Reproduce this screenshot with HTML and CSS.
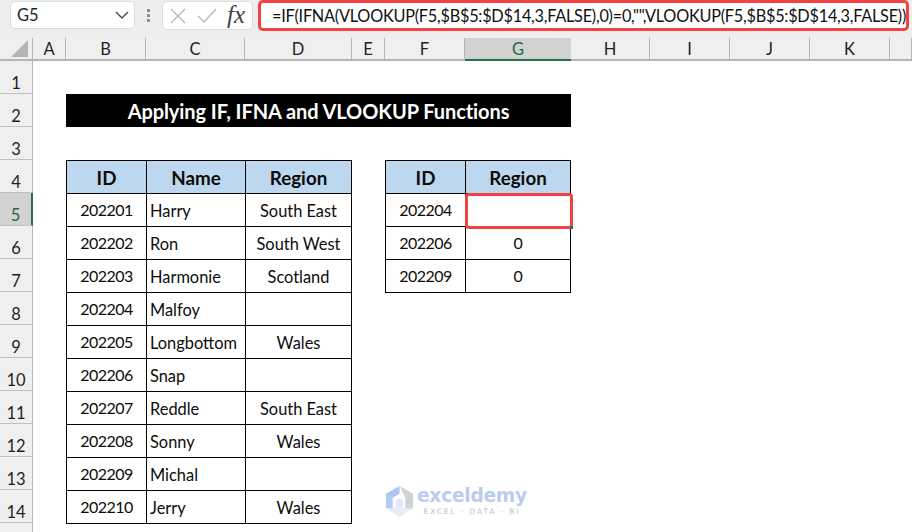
FILE: index.html
```html
<!DOCTYPE html>
<html lang="en">
<head>
<meta charset="utf-8">
<title>Applying IF, IFNA and VLOOKUP Functions</title>
<link rel="stylesheet" href="styles.css">
</head>
<body>
<div class="app">
  <div class="formula-row">
    <div class="name-box"><span>G5</span>
      <svg class="chev" width="14" height="8" viewBox="0 0 14 8"><path d="M1 1l6 6 6-6" fill="none" stroke="#444" stroke-width="1.4"/></svg>
    </div>
    <div class="grip"><i></i><i></i><i></i></div>
    <div class="fn-box">
      <svg width="16" height="16" viewBox="0 0 16 16"><path d="M1 1l14 14M15 1L1 15" fill="none" stroke="#b8b8b8" stroke-width="1.4"/></svg>
      <svg width="20" height="15" viewBox="0 0 20 15"><path d="M1 8l6 6L19 1" fill="none" stroke="#b8b8b8" stroke-width="1.4"/></svg>
      <span class="fx">fx</span>
    </div>
    <div class="formula">=IF(IFNA(VLOOKUP(F5,$B$5:$D$14,3,FALSE),0)=0,"",VLOOKUP(F5,$B$5:$D$14,3,FALSE))</div>
  </div>
  <div class="col-head">
    <div class="corner"><svg width="17" height="17" viewBox="0 0 17 17"><path d="M17 0v17H0z" fill="#b4b4b4"/></svg></div>
    <div class="ch w33">A</div><div class="ch w80">B</div><div class="ch w99">C</div><div class="ch w107">D</div><div class="ch w33">E</div><div class="ch w80">F</div><div class="ch w106 sel">G</div><div class="ch w79">H</div><div class="ch w80">I</div><div class="ch w80">J</div><div class="ch w80">K</div><div class="ch w22"></div>
  </div>
  <div class="body">
    <div class="row-head">
      <div class="rh">1</div><div class="rh">2</div><div class="rh">3</div><div class="rh">4</div><div class="rh sel">5</div><div class="rh">6</div><div class="rh">7</div><div class="rh">8</div><div class="rh">9</div><div class="rh">10</div><div class="rh">11</div><div class="rh">12</div><div class="rh">13</div><div class="rh">14</div><div class="rh"></div>
    </div>
    <div class="sheet">
      <div class="title">Applying IF, IFNA and VLOOKUP Functions</div>
      <div class="tbl tbl-left">
        <div class="c h">ID</div><div class="c h">Name</div><div class="c h">Region</div>
        <div class="c n">202201</div><div class="c l">Harry</div><div class="c">South East</div>
        <div class="c n">202202</div><div class="c l">Ron</div><div class="c">South West</div>
        <div class="c n">202203</div><div class="c l">Harmonie</div><div class="c">Scotland</div>
        <div class="c n">202204</div><div class="c l">Malfoy</div><div class="c"></div>
        <div class="c n">202205</div><div class="c l">Longbottom</div><div class="c">Wales</div>
        <div class="c n">202206</div><div class="c l">Snap</div><div class="c"></div>
        <div class="c n">202207</div><div class="c l">Reddle</div><div class="c">South East</div>
        <div class="c n">202208</div><div class="c l">Sonny</div><div class="c">Wales</div>
        <div class="c n">202209</div><div class="c l">Michal</div><div class="c"></div>
        <div class="c n">202210</div><div class="c l">Jerry</div><div class="c">Wales</div>
      </div>
      <div class="tbl tbl-right">
        <div class="c h">ID</div><div class="c h">Region</div>
        <div class="c n">202204</div><div class="c active"><span class="handle"></span></div>
        <div class="c n">202206</div><div class="c n">0</div>
        <div class="c n">202209</div><div class="c n">0</div>
      </div>
    </div>
    <div class="mark">
      <svg width="29" height="32" viewBox="0 0 30 33">
        <path d="M15 1L1 9v8l14-8z" fill="#a9c4ee"/>
        <path d="M1 9v15l7 4V13z" fill="#b3cbf1"/>
        <path d="M15 1l14 8v15l-8 4V13z" fill="#cfd3d6"/>
        <path d="M8 24l7-4 6 4 8 0-14 9-14-9z" fill="#e6edf6"/>
        <path d="M11 16l4-2 4 2v5l-4 2-4-2z" fill="#dfe8f5"/>
      </svg>
      <div class="mark-text"><div class="mark-name">exceldemy</div><div class="mark-sub">EXCEL · DATA · BI</div></div>
    </div>
  </div>
</div>
</body>
</html>
```
FILE: styles.css
```css
* { box-sizing: border-box; }
html, body { margin: 0; padding: 0; }
body { width: 912px; height: 532px; overflow: hidden; background: #fff; font-family: Lato, "Liberation Sans", sans-serif; color: #000; }
.app { width: 912px; height: 532px; display: flex; flex-direction: column; position: relative; }

.formula-row { height: 38px; background: #eeeeee; display: flex; align-items: flex-start; padding-left: 10px; }
.name-box { width: 125px; height: 28px; margin-top: 1px; background: #fff; border: 1px solid #dcdcdc; border-radius: 5px; display: flex; align-items: center; justify-content: space-between; padding: 0 5px 0 6px; font-size: 16.5px; color: #222; }
.grip { width: 27px; height: 28px; margin-top: 1px; display: flex; flex-direction: column; justify-content: center; align-items: center; gap: 2px; }
.grip i { width: 3px; height: 3px; background: #8e8e8e; display: block; }
.fn-box { width: 91px; height: 29px; margin-top: 1px; background: #fff; border: 1px solid #dcdcdc; border-radius: 5px; display: flex; align-items: center; padding-left: 7px; gap: 11px; }
.fx { font-family: "Liberation Serif", serif; font-style: italic; font-size: 25px; color: #444; line-height: 1; margin-left: -1px; margin-top: -2px; }
.formula { width: 651px; height: 31px; margin-left: 5px; background: #fff; border: 3px solid #f44144; border-radius: 5px; padding-left: 11px; font-size: 16.3px; line-height: 25px; letter-spacing: -0.245px; color: #111; white-space: nowrap; overflow: hidden; }

.col-head { height: 23px; background: #efefef; display: flex; border-bottom: 2px solid #b5b5b5; }
.corner { width: 33px; display: flex; align-items: flex-end; justify-content: flex-end; padding: 0 4px 2px 0; border-right: 1px solid #b5b5b5; }
.ch { display: flex; align-items: center; justify-content: center; font-size: 16.5px; color: #1f1f1f; border-right: 1px solid #b5b5b5; padding-top: 1px; }
.ch.sel { background: #d2d2d2; color: #1d6a42; margin-bottom: -2px; border-bottom: 2px solid #217346; border-right: 0; }
.w22 { width: 22px; } .w33 { width: 33px; } .w79 { width: 79px; } .w80 { width: 80px; } .w99 { width: 99px; } .w106 { width: 106px; } .w107 { width: 107px; }

.body { flex: 1; display: flex; min-height: 0; }
.row-head { width: 33px; background: #efefef; border-right: 1px solid #b5b5b5; flex: none; }
.rh { height: 33px; border-bottom: 1px solid #c0c0c0; display: flex; align-items: center; justify-content: center; font-size: 16.5px; padding-top: 11px; color: #1f1f1f; }
.rh.sel { background: #d2d2d2; color: #1d6a42; border-right: 2px solid #217346; margin-right: -1px; }

.sheet { flex: 1; display: grid; grid-template-columns: 33px 80px 99px 107px 33px 80px 106px 1fr; grid-template-rows: repeat(15, 33px); }
.title { grid-column: 2 / 8; grid-row: 2; background: #000; color: #fff; font-weight: 700; font-size: 20px; letter-spacing: -0.08px; display: flex; align-items: center; justify-content: center; }
.tbl { display: grid; grid-auto-rows: 33px; border-top: 1px solid #000; border-left: 1px solid #000; }
.tbl-left { grid-column: 2 / 5; grid-row: 4 / 15; grid-template-columns: 80px 99px 106px; width: 286px; height: 364px; }
.tbl-right { grid-column: 6 / 8; grid-row: 4 / 8; grid-template-columns: 80px 105px; width: 186px; height: 133px; }
.c { border-right: 1px solid #000; border-bottom: 1px solid #000; display: flex; align-items: center; justify-content: center; font-size: 16.4px; color: #0c0c0c; }
.c.n { font-size: 16px; letter-spacing: -0.5px; padding-bottom: 1px; }
.c.l { justify-content: flex-start; padding-left: 3px; }
.c.h { background: #bdd7ee; font-weight: 700; font-size: 18.8px; }
.c.active { position: relative; }
.c.active::after { content: ""; position: absolute; left: -1px; top: -1px; right: -3px; bottom: -3px; border: 3px solid #f44144; border-radius: 4px; }
.handle { position: absolute; right: -3px; bottom: -3px; width: 3px; height: 3px; background: #217346; z-index: 1; }

.mark { position: absolute; left: 385px; top: 485px; display: flex; gap: 3px; align-items: flex-start; }
.mark-name { font-family: "DejaVu Sans", sans-serif; font-weight: 700; font-size: 18.7px; line-height: 22px; color: #b9cdf0; letter-spacing: -0.3px; }
.mark-sub { font-family: "DejaVu Sans", sans-serif; font-size: 7.5px; line-height: 9px; letter-spacing: 1.9px; color: #c0c0c0; text-align: center; }
```
